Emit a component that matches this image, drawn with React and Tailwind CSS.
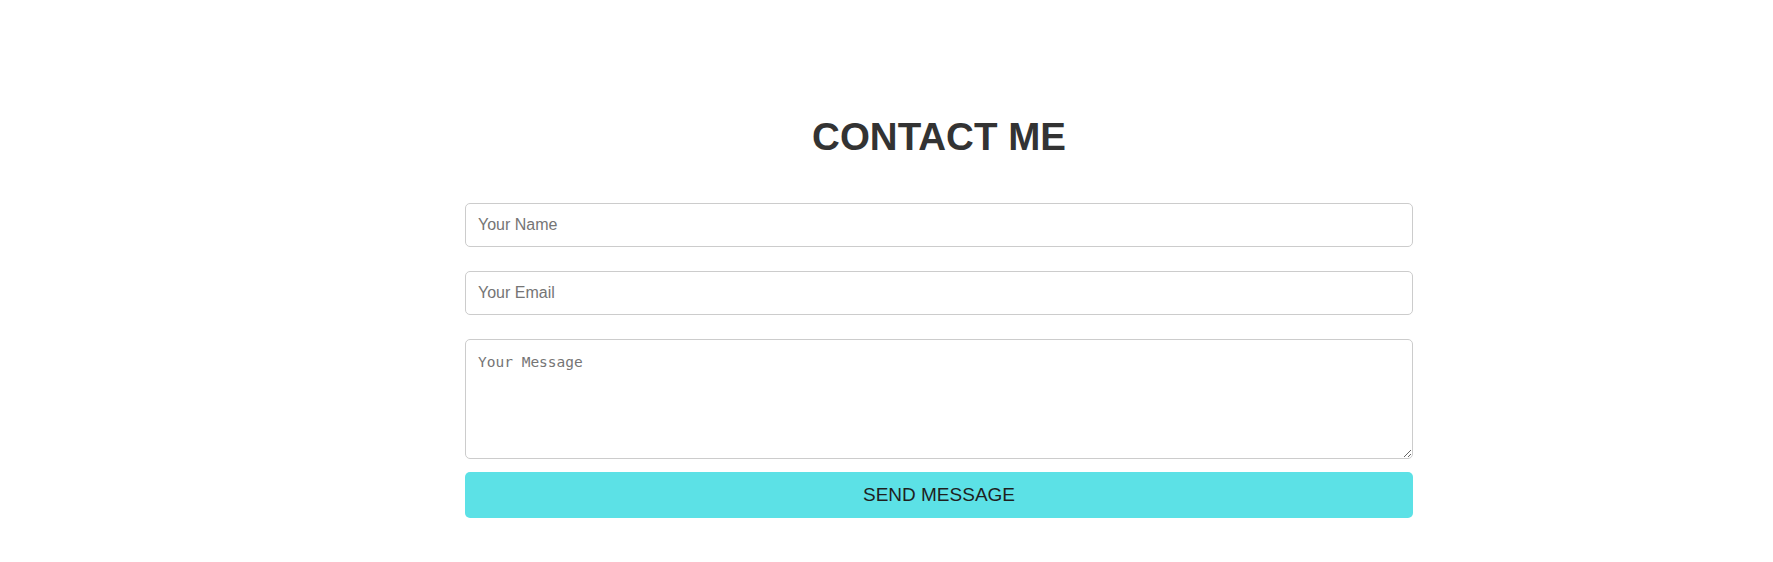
export default function App() {
  return (
    <div className="min-h-[562px] w-full bg-white pl-[105px] pt-[115px]" style={{ fontFamily: '"Liberation Sans", Arial, sans-serif' }}>
      <div className="mx-auto w-[948px]">
        <h2 className="text-center text-[38.5px] leading-[44px] font-bold text-[#333333]">CONTACT ME</h2>

        <form className="mt-[44px] flex flex-col" onSubmit={e => e.preventDefault()}>
          <input
            type="text"
            placeholder="Your Name"
            className="h-[44px] w-full rounded-[5px] border border-[#cccccc] px-[12px] text-[16px] text-[#333] placeholder:text-[#757575] outline-none"
            style={{ fontFamily: '"Liberation Sans", Arial, sans-serif' }}
          />
          <input
            type="email"
            placeholder="Your Email"
            className="mt-[24px] h-[44px] w-full rounded-[5px] border border-[#cccccc] px-[12px] text-[16px] text-[#333] placeholder:text-[#757575] outline-none"
            style={{ fontFamily: '"Liberation Sans", Arial, sans-serif' }}
          />
          <textarea
            placeholder="Your Message"
            className="mt-[24px] h-[120px] w-full rounded-[5px] border border-[#cccccc] px-[12px] pt-[13px] pb-[10px] text-[14.5px] leading-[18px] text-[#333] placeholder:text-[#757575] outline-none"
            style={{ fontFamily: '"DejaVu Sans Mono", monospace' }}
          />
          <button
            type="submit"
            className="mt-[13px] h-[46px] w-full rounded-[5px] border-0 bg-[#5ce1e6] text-[19px] text-[#1f1f1f]"
          >
            SEND MESSAGE
          </button>
        </form>
      </div>
    </div>
  );
}
